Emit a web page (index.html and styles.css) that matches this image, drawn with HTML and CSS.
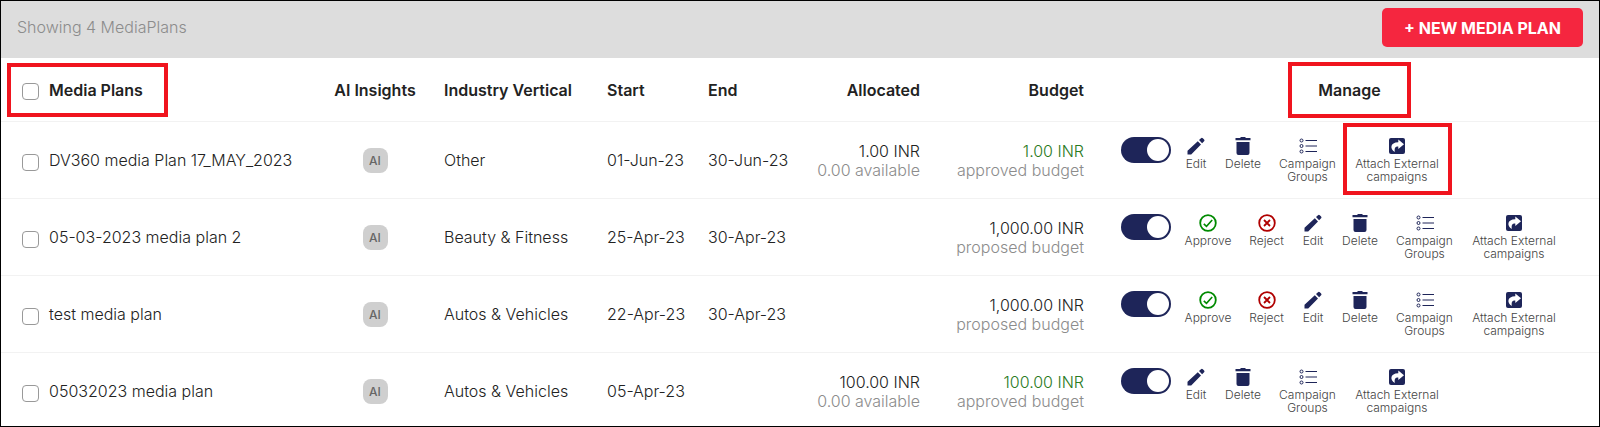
FILE: index.html
```
<!DOCTYPE html>
<html lang="en">
<head>
    <meta charset="UTF-8">
    <meta name="viewport" content="width=device-width, initial-scale=1.0">
    <title>Media Plans</title>
    <link rel="stylesheet" href="styles.css">
</head>
<body>
    <svg class="sprite" aria-hidden="true">
        <symbol id="edit" viewBox="0 0 18 18">
            <path d="M.5 17.500v-3.700L10.800 4.200l3.200 3.200L4.200 17.500zM12 3.100L14 1.200a1.300 1.300 0 0 1 1.800 0L17.100 2.500a1.300 1.300 0 0 1 0 1.800L15.100 6.200z"/>
        </symbol>
        <symbol id="delete" viewBox="0 0 18 18">
            <path d="M2.500 5h13v11a2 2 0 0 1-2 2h-9a2 2 0 0 1-2-2zM1.500 1H6l1-1h4l1 1h4.500v2.300h-15z"/>
        </symbol>
        <symbol id="groups" viewBox="0 0 18 18">
            <g fill="none" stroke="currentColor" stroke-width="1">
                <circle cx="2.500" cy="3.500" r="1.500"/>
                <circle cx="2.500" cy="9" r="1.500"/>
                <circle cx="2.500" cy="14.500" r="1.500"/>
                <path d="M6.500 3.500H18M6.500 9H18M6.500 14.500H18"/>
            </g>
        </symbol>
        <symbol id="attach" viewBox="0 0 18 18">
            <rect x="1" y="1" width="16" height="16" rx="2"/>
            <path fill="#fff" d="M10.300 2.500L16 7.300l-5.700 4.800V9.500C7.500 9.400 6.200 10.500 6.800 15 1.800 12 1.900 5.300 10.300 5.200z"/>
        </symbol>
        <symbol id="approve" viewBox="0 0 18 18">
            <g fill="none" stroke="currentColor">
                <circle cx="9" cy="9" r="7.800" stroke-width="1.800"/>
                <path d="M4.800 9.800l2.700 2.500 5.700-6.300" stroke-width="1.600"/>
            </g>
        </symbol>
        <symbol id="reject" viewBox="0 0 18 18">
            <g fill="none" stroke="currentColor" stroke-width="1.800">
                <circle cx="9" cy="9" r="7.800"/>
                <path d="M6 6l6 6M12 6l-6 6"/>
            </g>
        </symbol>
    </svg>

    <div class="page">
        <div class="topbar">
            <span>Showing 4 MediaPlans</span>
            <button class="new-plan">+ NEW MEDIA PLAN</button>
        </div>

        <table class="plans">
            <colgroup>
                <col class="col-name">
                <col class="col-ai">
                <col class="col-industry">
                <col class="col-date">
                <col class="col-date">
                <col class="col-allocated">
                <col class="col-budget">
                <col class="col-manage">
            </colgroup>
            <thead>
                <tr>
                    <th><div class="name marked marked-name"><input type="checkbox" id="all"><label for="all">Media Plans</label></div></th>
                    <th class="center">AI Insights</th>
                    <th>Industry Vertical</th>
                    <th>Start</th>
                    <th>End</th>
                    <th class="right">Allocated</th>
                    <th class="right">Budget</th>
                    <th class="center manage-title"><span class="marked marked-manage">Manage</span></th>
                </tr>
            </thead>
            <tbody>
                <tr>
                    <td><div class="name"><input type="checkbox" id="plan1"><label for="plan1">DV360 media Plan 17_MAY_2023</label></div></td>
                    <td class="center"><button class="ai">AI</button></td>
                    <td>Other</td>
                    <td>01-Jun-23</td>
                    <td>30-Jun-23</td>
                    <td class="right">1.00 INR<div class="note">0.00 available</div></td>
                    <td class="right"><span class="approved">1.00 INR</span><div class="note">approved budget</div></td>
                    <td class="manage">
                        <div class="actions">
                            <input class="toggle" type="checkbox" role="switch" aria-label="Active" checked>
                            <button class="action edit"><svg><use href="#edit"/></svg>Edit</button>
                            <button class="action delete"><svg><use href="#delete"/></svg>Delete</button>
                            <button class="action groups"><svg><use href="#groups"/></svg>Campaign Groups</button>
                            <button class="action attach marked marked-attach"><svg><use href="#attach"/></svg>Attach External campaigns</button>
                        </div>
                    </td>
                </tr>
                <tr>
                    <td><div class="name"><input type="checkbox" id="plan2"><label for="plan2">05-03-2023 media plan 2</label></div></td>
                    <td class="center"><button class="ai">AI</button></td>
                    <td>Beauty &amp; Fitness</td>
                    <td>25-Apr-23</td>
                    <td>30-Apr-23</td>
                    <td></td>
                    <td class="right">1,000.00 INR<div class="note">proposed budget</div></td>
                    <td class="manage">
                        <div class="actions">
                            <input class="toggle" type="checkbox" role="switch" aria-label="Active" checked>
                            <button class="action approve"><svg><use href="#approve"/></svg>Approve</button>
                            <button class="action reject"><svg><use href="#reject"/></svg>Reject</button>
                            <button class="action edit"><svg><use href="#edit"/></svg>Edit</button>
                            <button class="action delete"><svg><use href="#delete"/></svg>Delete</button>
                            <button class="action groups"><svg><use href="#groups"/></svg>Campaign Groups</button>
                            <button class="action attach"><svg><use href="#attach"/></svg>Attach External campaigns</button>
                        </div>
                    </td>
                </tr>
                <tr>
                    <td><div class="name"><input type="checkbox" id="plan3"><label for="plan3">test media plan</label></div></td>
                    <td class="center"><button class="ai">AI</button></td>
                    <td>Autos &amp; Vehicles</td>
                    <td>22-Apr-23</td>
                    <td>30-Apr-23</td>
                    <td></td>
                    <td class="right">1,000.00 INR<div class="note">proposed budget</div></td>
                    <td class="manage">
                        <div class="actions">
                            <input class="toggle" type="checkbox" role="switch" aria-label="Active" checked>
                            <button class="action approve"><svg><use href="#approve"/></svg>Approve</button>
                            <button class="action reject"><svg><use href="#reject"/></svg>Reject</button>
                            <button class="action edit"><svg><use href="#edit"/></svg>Edit</button>
                            <button class="action delete"><svg><use href="#delete"/></svg>Delete</button>
                            <button class="action groups"><svg><use href="#groups"/></svg>Campaign Groups</button>
                            <button class="action attach"><svg><use href="#attach"/></svg>Attach External campaigns</button>
                        </div>
                    </td>
                </tr>
                <tr>
                    <td><div class="name"><input type="checkbox" id="plan4"><label for="plan4">05032023 media plan</label></div></td>
                    <td class="center"><button class="ai">AI</button></td>
                    <td>Autos &amp; Vehicles</td>
                    <td>05-Apr-23</td>
                    <td></td>
                    <td class="right">100.00 INR<div class="note">0.00 available</div></td>
                    <td class="right"><span class="approved">100.00 INR</span><div class="note">approved budget</div></td>
                    <td class="manage">
                        <div class="actions">
                            <input class="toggle" type="checkbox" role="switch" aria-label="Active" checked>
                            <button class="action edit"><svg><use href="#edit"/></svg>Edit</button>
                            <button class="action delete"><svg><use href="#delete"/></svg>Delete</button>
                            <button class="action groups"><svg><use href="#groups"/></svg>Campaign Groups</button>
                            <button class="action attach"><svg><use href="#attach"/></svg>Attach External campaigns</button>
                        </div>
                    </td>
                </tr>
            </tbody>
        </table>
    </div>
</body>
</html>
```

FILE: styles.css
```
* {
    box-sizing: border-box;
}
body {
    margin: 0;
    font-family: Inter, sans-serif;
    font-size: 16px;
    font-weight: 300;
    line-height: 19px;
    color: #222;
    background: #fff;
}
button {
    font-family: inherit;
    border: none;
    cursor: pointer;
}
.sprite {
    display: none;
}
.page {
    height: 100vh;
    overflow: hidden;
    border: 1px solid #000;
}

/* top bar */
.topbar {
    display: flex;
    justify-content: space-between;
    align-items: center;
    height: 57px;
    padding: 0 16px 4px;
    background: #ddd;
    color: #8c8c8c;
}
.new-plan {
    height: 39px;
    padding: 0 22px;
    border-radius: 5px;
    background: #f5263f;
    color: #fff;
    font-size: 16px;
    font-weight: 700;
}

/* table */
.plans {
    width: 100%;
    table-layout: fixed;
    border-collapse: collapse;
}
.col-ai {
    width: 122px;
}
.col-industry {
    width: 163px;
}
.col-date {
    width: 101px;
}
.col-allocated {
    width: 127px;
}
.col-budget {
    width: 164px;
}
.col-manage {
    width: 507px;
}
.plans th,
.plans td {
    height: 77px;
    padding: 2px 8px 0;
    border-bottom: 1px solid #f2f2f2;
    text-align: left;
}
.plans th {
    height: 63px;
    font-weight: 600;
}
.plans .center {
    text-align: center;
}
.plans .right {
    text-align: right;
}
.plans .manage-title {
    padding-left: 16px;
}
.plans .manage {
    padding: 15px 0 0 29px;
    vertical-align: top;
}
.name {
    display: flex;
    align-items: center;
    gap: 10px;
    width: fit-content;
    padding-left: 13px;
}
.name input {
    appearance: none;
    width: 17px;
    height: 17px;
    margin: 3px 0 0;
    border: 1px solid #999;
    border-radius: 4px;
    background: #fff;
}
.note {
    color: #8c8c8c;
}
.approved {
    color: #2a7a22;
}
.ai {
    width: 25px;
    height: 25px;
    padding: 0;
    border-radius: 8px;
    background: #cfcfcf;
    color: #666;
    font-size: 12px;
    font-weight: 500;
}

/* row actions */
.actions {
    display: flex;
    align-items: flex-start;
    gap: 18px;
}
.toggle {
    appearance: none;
    display: flex;
    justify-content: flex-end;
    width: 50px;
    height: 26px;
    margin: 0 -4px 0 0;
    padding: 2px;
    border-radius: 13px;
    background: #1e2559;
}
.toggle::before {
    content: "";
    width: 22px;
    height: 22px;
    border-radius: 50%;
    background: #fff;
}
.action {
    display: flex;
    flex-direction: column;
    align-items: center;
    gap: 2px;
    padding: 0;
    background: none;
    color: #444;
    font-size: 12px;
    font-weight: 300;
    line-height: 13px;
}
.action svg {
    width: 18px;
    height: 18px;
    fill: currentColor;
    color: #1e2559;
}
.edit {
    width: 22px;
}
.delete {
    width: 36px;
}
.groups {
    width: 57px;
}
.attach {
    width: 86px;
}
.approve {
    width: 46px;
}
.reject {
    width: 35px;
}
.approve svg {
    color: #008a00;
}
.reject svg {
    color: #b00000;
}

/* red highlight frames */
.marked {
    position: relative;
}
.marked::after {
    content: "";
    position: absolute;
    border: 4px solid #f0141e;
    pointer-events: none;
}
.marked-name::after {
    inset: -17px -25px -17px -2px;
}
.marked-manage::after {
    inset: -18px -30px;
}
.marked-attach::after {
    inset: -14px -12px -12px -11px;
}
```
